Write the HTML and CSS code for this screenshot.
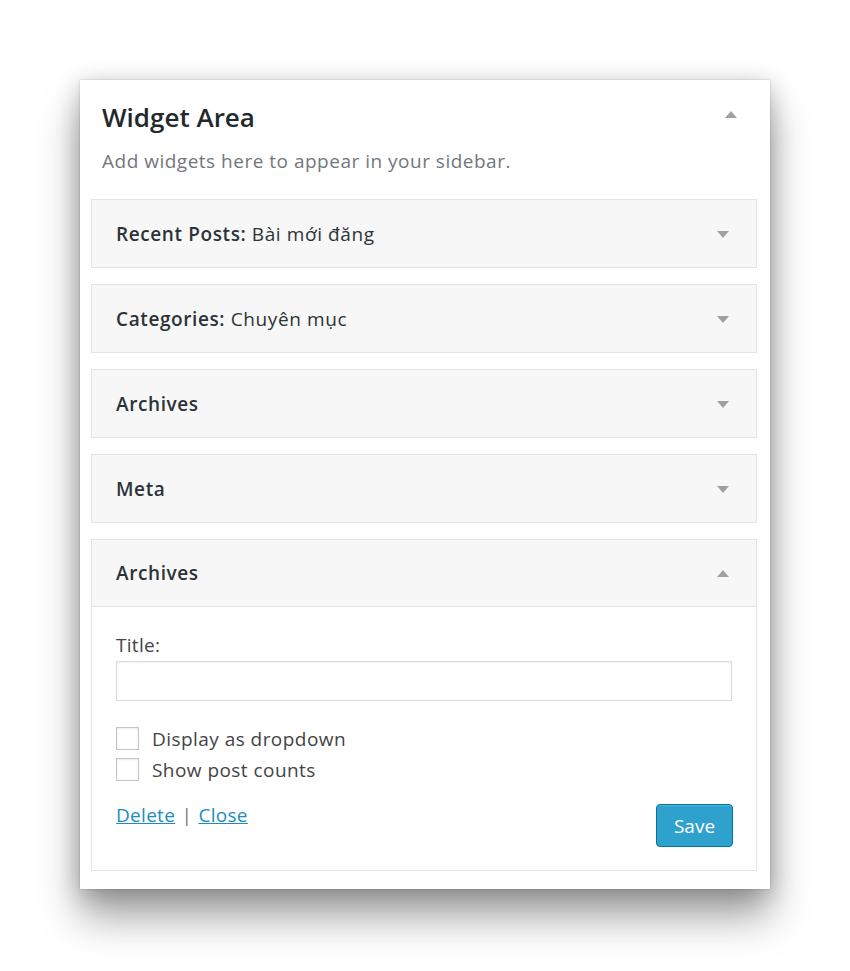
FILE: index.html
```html
<!DOCTYPE html>
<html>
<head>
<meta charset="utf-8">
<link rel="stylesheet" href="styles.css">
</head>
<body>
<div class="panel">
  <div class="panel-head">
    <h2 class="panel-title">Widget Area</h2>
    <span class="arrow up panel-arrow"></span>
  </div>
  <p class="panel-desc">Add widgets here to appear in your sidebar.</p>
  <div class="widgets">
    <div class="widget">
      <div class="widget-top"><span class="w-title"><b>Recent Posts:</b> Bài mới đăng</span><span class="arrow down"></span></div>
    </div>
    <div class="widget">
      <div class="widget-top"><span class="w-title"><b>Categories:</b> Chuyên mục</span><span class="arrow down"></span></div>
    </div>
    <div class="widget">
      <div class="widget-top"><span class="w-title"><b>Archives</b></span><span class="arrow down"></span></div>
    </div>
    <div class="widget">
      <div class="widget-top"><span class="w-title"><b>Meta</b></span><span class="arrow down"></span></div>
    </div>
    <div class="widget open">
      <div class="widget-top open-top"><span class="w-title"><b>Archives</b></span><span class="arrow up"></span></div>
      <div class="widget-body">
        <label class="field-label">Title:</label>
        <div class="input"></div>
        <div class="checks">
          <div class="check"><span class="box"></span><span>Display as dropdown</span></div>
          <div class="check"><span class="box"></span><span>Show post counts</span></div>
        </div>
        <div class="actions">
          <div class="links"><a class="link">Delete</a> <span class="sep">|</span> <a class="link">Close</a></div>
          <button class="save">Save</button>
        </div>
      </div>
    </div>
  </div>
</div>
</body>
</html>
```
FILE: styles.css
```css
html, body {
  margin: 0;
  padding: 0;
  background: #ffffff;
}
body {
  font-family: "Open Sans", "Noto Sans", sans-serif;
  color: #32373c;
  padding: 80px 0 82px 80px;
}
.panel {
  width: 690px;
  box-sizing: border-box;
  background: #fff;
  padding: 0 13px 18px 11px;
  box-shadow: 0 28px 38px rgba(0,0,0,0.36), 0 4px 22px rgba(0,0,0,0.22), 0 0 2px rgba(0,0,0,0.2);
}
.panel-head {
  display: flex;
  justify-content: space-between;
  align-items: center;
  padding: 21px 20px 0 11px;
}
.panel-title {
  margin: 0;
  font-size: 26px;
  line-height: 32px;
  font-weight: 600;
  color: #23282d;
}
.panel-arrow { margin-top: -6px; }
.panel-desc {
  margin: 16px 0 26px 11px;
  font-size: 19px;
  line-height: 24px;
  letter-spacing: 0.5px;
  color: #72777c;
}
.widgets {
  display: flex;
  flex-direction: column;
  gap: 16px;
}
.widget {
  border: 1px solid #e2e4e7;
  background: #f7f7f7;
}
.widget-top {
  height: 67px;
  display: flex;
  align-items: center;
  justify-content: space-between;
  padding: 0 27px 0 24px;
}
.open-top {
  height: 66px;
  border-bottom: 1px solid #e2e4e7;
}
.w-title {
  font-size: 19px;
  letter-spacing: 0.6px;
  color: #2c3338;
  font-weight: 400;
}
.w-title b { font-weight: 600; }
.arrow {
  width: 0;
  height: 0;
  border-left: 6px solid transparent;
  border-right: 6px solid transparent;
}
.arrow.down { border-top: 7px solid #9da1a5; margin-top: 2px; }
.arrow.up { border-bottom: 7px solid #9da1a5; }
.widget.open { background: #fff; }
.widget.open .widget-top { background: #f7f7f7; }
.widget-body {
  padding: 26px 24px 23px 24px;
}
.field-label {
  display: block;
  font-size: 19px;
  line-height: 24px;
  letter-spacing: 0.3px;
  color: #444;
}
.input {
  margin-top: 4px;
  height: 38px;
  width: 614px;
  border: 1px solid #dcdcdc;
  box-shadow: inset 0 1px 2px rgba(0,0,0,0.07);
  background: #fff;
}
.checks {
  margin-top: 26px;
  display: flex;
  flex-direction: column;
  gap: 8px;
}
.check {
  display: flex;
  align-items: center;
  gap: 13px;
  font-size: 19px;
  letter-spacing: 0.45px;
  color: #444;
  height: 23px;
}
.box {
  width: 21px;
  height: 21px;
  border: 1px solid #c5c5c5;
  background: #fff;
  box-shadow: inset 0 1px 2px rgba(0,0,0,0.08);
}
.actions {
  display: flex;
  justify-content: space-between;
  align-items: flex-start;
  margin-top: 22px;
}
.links {
  font-size: 19px;
  line-height: 24px;
  letter-spacing: 0.3px;
  color: #666;
}
.link {
  color: #1e8cbe;
  text-decoration: underline;
}
.sep { color: #777; margin: 0 1px; }
.save {
  margin-top: 1px;
  margin-right: -1px;
  width: 77px;
  height: 43px;
  background: #2ea2cc;
  border: 1px solid #0074a2;
  border-radius: 4px;
  color: #fff;
  font-family: "Open Sans", "Noto Sans", sans-serif;
  font-size: 19px;
  font-weight: 400;
  box-shadow: inset 0 1px 0 rgba(120,200,230,0.5);
}
```
